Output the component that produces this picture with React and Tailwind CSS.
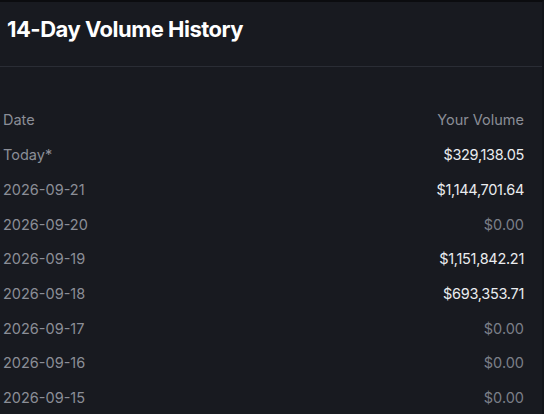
export default function App() {
  const rows = [
    ["Today*", "$329,138.05", true],
    ["2026-09-21", "$1,144,701.64", true],
    ["2026-09-20", "$0.00", false],
    ["2026-09-19", "$1,151,842.21", true],
    ["2026-09-18", "$693,353.71", true],
    ["2026-09-17", "$0.00", false],
    ["2026-09-16", "$0.00", false],
    ["2026-09-15", "$0.00", false],
  ];
  return (
    <div className="w-[544px] h-[414px] overflow-hidden bg-[#181a20] border-t-2 border-[#0b0c0f] border-r-2 border-r-[#121419] font-['Inter',sans-serif] flex flex-col">
      <div className="h-[65px] shrink-0 flex items-start pl-[7px] pt-[14px] border-b border-[#2a2d35]">
        <h1 className="text-[22px] leading-[26px] font-bold text-white tracking-[-0.5px]">14-Day Volume History</h1>
      </div>
      <div className="shrink-0 pt-[36px] pl-[3px] pr-[18px]">
        <div className="flex justify-between items-center h-[34.7px] text-[14.5px] text-[#8b8e97]">
          <span>Date</span>
          <span>Your Volume</span>
        </div>
        {rows.map(([d, v, hi]) => (
          <div key={d} className="flex justify-between items-center h-[34.7px] text-[14.5px]">
            <span className="text-[#8b8e97]">{d}</span>
            <span className={hi ? "text-[#eaecef] tracking-[-0.3px]" : "text-[#7b7f88]"}>{v}</span>
          </div>
        ))}
      </div>
    </div>
  );
}
